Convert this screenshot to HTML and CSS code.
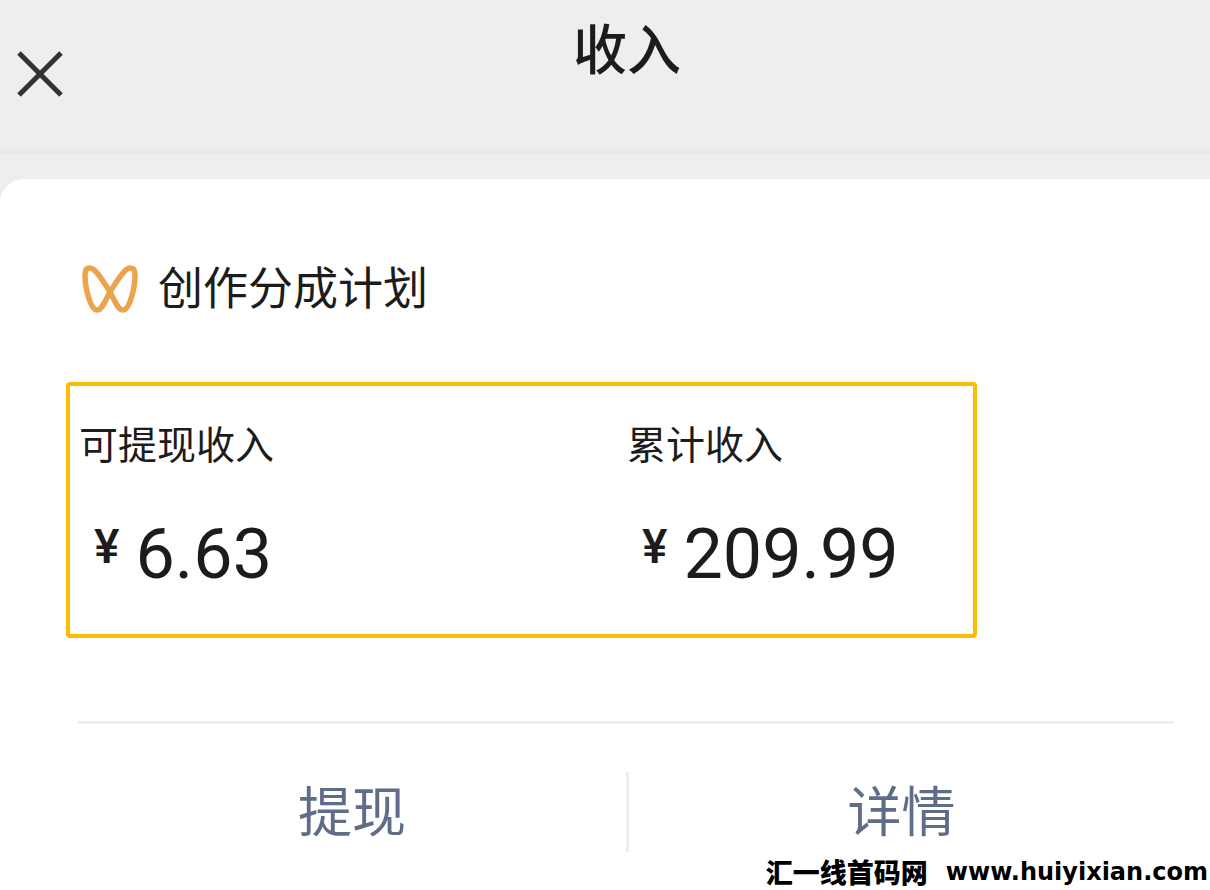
FILE: index.html
```html
<!DOCTYPE html>
<html lang="zh-CN">
<head>
    <meta charset="UTF-8">
    <meta name="viewport" content="width=device-width, initial-scale=1.0">
    <title>收入</title>
    <link rel="stylesheet" href="styles.css">
</head>
<body>
    <header class="navbar">
        <button class="close-btn" type="button" aria-label="关闭">
            <svg viewBox="0 0 48 48" width="48" height="48" fill="none" stroke="#333333" stroke-width="5">
                <path d="M3 3L45 45M45 3L3 45"/>
            </svg>
        </button>
        <h1>收入</h1>
    </header>

    <main class="card">
        <div class="plan">
            <svg class="plan-logo" viewBox="0 0 56 50" width="56" height="50" fill="none" stroke="#eba44e" stroke-width="5.5" stroke-linejoin="round">
                <path d="M8 4C13 4 20 15 28 28C33 37 36 46 41 46C48 46 53 22 53 12C53 6 52 4 48 4C43 4 36 15 28 28C23 37 20 46 15 46C8 46 3 22 3 12C3 6 4 4 8 4Z"/>
            </svg>
            <h2>创作分成计划</h2>
        </div>

        <section class="income">
            <div class="income-item">
                <p class="label">可提现收入</p>
                <p class="amount"><span class="yen">¥</span>6.63</p>
            </div>
            <div class="income-item">
                <p class="label">累计收入</p>
                <p class="amount"><span class="yen">¥</span>209.99</p>
            </div>
        </section>

        <nav class="actions">
            <a href="#withdraw">提现</a>
            <a href="#detail">详情</a>
        </nav>
    </main>

    <div class="watermark"><span>汇一线首码网</span><span class="site">www.huiyixian.com</span></div>
</body>
</html>
```

FILE: styles.css
```css
* {
    box-sizing: border-box;
}
body {
    font-family: "Noto Sans CJK SC", sans-serif;
    background-color: #eeeeee;
    color: #1c1c1c;
    margin: 0;
    min-height: 100vh;
    display: flex;
    flex-direction: column;
}
h1, h2, p {
    margin: 0;
    font-weight: 400;
}
.navbar {
    display: grid;
    grid-template-columns: 64px 1fr 36px;
    height: 154px;
    padding: 0 0 0 16px;
    border-bottom: 3px solid #e9e9e9;
}
.navbar h1 {
    font-size: 54px;
    line-height: 60px;
    font-weight: 500;
    text-align: center;
    padding-top: 17px;
}
.close-btn {
    align-self: start;
    width: 48px;
    height: 48px;
    margin-top: 50px;
    padding: 0;
    border: none;
    background: none;
    cursor: pointer;
}
.close-btn svg {
    display: block;
}
.card {
    flex: 1;
    margin-top: 25px;
    padding: 80px 36px 0 66px;
    background-color: #fff;
    border-radius: 24px 0 0 0;
}
.plan {
    display: flex;
    align-items: center;
    gap: 20px;
    padding-left: 16px;
}
.plan h2 {
    font-size: 45px;
    line-height: 54px;
    padding-bottom: 6px;
}
.income {
    display: grid;
    grid-template-columns: 548px 1fr;
    margin: 63px 197px 0 0;
    padding: 28px 9px 38px;
    border: 4px solid #fcbc04;
    border-radius: 4px;
}
.label {
    font-size: 39px;
    line-height: 56px;
}
.amount {
    display: flex;
    align-items: flex-start;
    gap: 16px;
    margin-top: 42px;
    padding-left: 15px;
    font-family: Roboto, "Noto Sans CJK SC", sans-serif;
    font-size: 70px;
    line-height: 84px;
}
.yen {
    font-size: 48px;
    line-height: 70px;
    font-weight: 500;
}
.actions {
    display: grid;
    grid-template-columns: 1fr 1fr;
    margin: 83px 0 0 12px;
    padding: 48px 0 38px;
    border-top: 3px solid #efefef;
}
.actions a {
    color: #5f6d89;
    font-size: 54px;
    line-height: 74px;
    padding-bottom: 6px;
    text-align: center;
    text-decoration: none;
}
.actions a + a {
    border-left: 3px solid #efefef;
}
.watermark {
    position: absolute;
    right: 2px;
    bottom: 0;
    display: flex;
    align-items: center;
    gap: 18px;
    color: #000;
    font-size: 27px;
    line-height: 36px;
    font-weight: 900;
}
.site {
    font-family: "DejaVu Sans", sans-serif;
    font-size: 24px;
    font-weight: 700;
}
```
